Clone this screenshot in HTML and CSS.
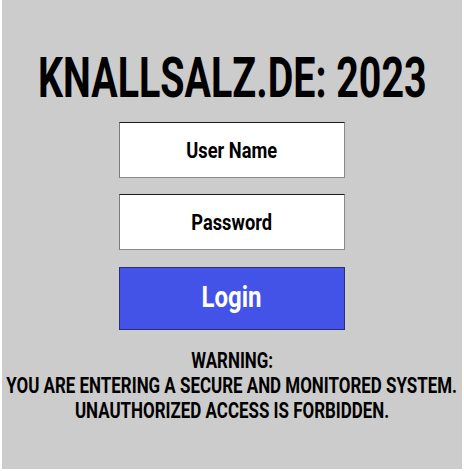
FILE: index.html
```html
<!DOCTYPE html>
<html>
  <head>
    <meta charset="UTF-8" />
    <title>Knallsalz.de Login</title>
    <link rel="stylesheet" href="styles.css">
  </head>
  <body>
    <div class="screen">
      <h1 class="title"><span class="narrow">KNALLSALZ.DE: 2023</span></h1>
      <form class="login">
        <label class="field"><span class="narrow">User Name</span></label>
        <label class="field"><span class="narrow">Password</span></label>
        <button type="button" class="btn"><span class="narrow">Login</span></button>
      </form>
      <p class="warning">
        <span class="narrow">WARNING:</span><br />
        <span class="narrow">YOU ARE ENTERING A SECURE AND MONITORED SYSTEM.</span><br />
        <span class="narrow">UNAUTHORIZED ACCESS IS FORBIDDEN.</span>
      </p>
    </div>
  </body>
</html>
```

FILE: styles.css
```css
body {
  margin: 0;
  background-color: white;
  font-family: Roboto, "Liberation Sans", sans-serif;
}

.screen {
  margin: 0 2px;
  height: 469px;
  background-color: #cccccc;
  display: flex;
  flex-direction: column;
  align-items: center;
  overflow: hidden;
}

/* the original font is a condensed one, squeeze the text */
.narrow {
  display: inline-block;
  white-space: nowrap;
  transform-origin: center;
}

.title {
  margin: 51px 0 0 0;
  font-size: 55px;
  font-weight: bold;
  line-height: 55px;
  color: black;
}

.title .narrow {
  transform: scaleX(0.716);
}

.login {
  margin-top: 16px;
  display: flex;
  flex-direction: column;
  gap: 16px;
}

.field,
.btn {
  box-sizing: border-box;
  width: 226px;
  display: flex;
  align-items: center;
  justify-content: center;
  font-family: inherit;
  font-weight: bold;
  margin: 0;
  padding: 0;
}

.field {
  height: 56px;
  border: 1px solid #8a8a8a;
  border-top-color: #1a1a1a;
  border-left-color: #7a7a7a;
  background: white;
  font-size: 22px;
  color: black;
}

.field .narrow {
  transform: scaleX(0.83);
}

.btn {
  margin-top: 1px;
  height: 63px;
  padding-bottom: 4px;
  border: 1px solid #26307a;
  background-color: #4353e8;
  color: white;
  font-size: 30px;
}

.btn .narrow {
  transform: scaleX(0.8);
}

.warning {
  margin: 18px 0 0 0;
  font-size: 22px;
  font-weight: bold;
  line-height: 25px;
  text-align: center;
}

.warning .narrow {
  transform: scaleX(0.77);
}
```
